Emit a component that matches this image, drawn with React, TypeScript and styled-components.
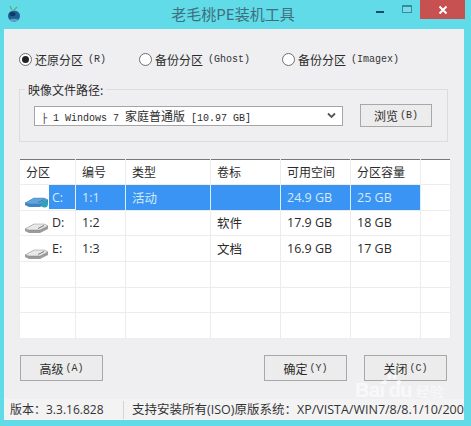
import React from "react";
import styled, { createGlobalStyle } from "styled-components";

const CJK = `"Noto Sans CJK SC", sans-serif`;
const UI = `"Open Sans", "Noto Sans CJK SC", sans-serif`;
const MONO = `"Liberation Mono", "Noto Sans CJK SC", monospace`;

const Global = createGlobalStyle`
  html, body { margin: 0; padding: 0; background: #62dbe9; }
  * { box-sizing: border-box; }
`;

const Win = styled.div`
  position: relative;
  width: 471px;
  height: 426px;
  background: #62dbe9;
  display: flex;
  flex-direction: column;
  overflow: hidden;
  font-family: ${CJK};
  color: #222;
`;
const TitleBar = styled.div`
  height: 29px;
  flex: none;
  display: grid;
  grid-template-columns: 1fr auto 1fr;
  padding-right: 6px;
`;
const TitleIcon = styled.svg`
  width: 14px;
  height: 18px;
  margin: 5px 0 0 7px;
`;
const Title = styled.div`
  font-size: 15px;
  line-height: 28px;
  color: #3d6f7c;
  padding-left: 1px;
`;
const Controls = styled.div`
  display: flex;
  justify-content: flex-end;
  align-items: flex-start;
`;
const MinBtn = styled.div`
  width: 8px;
  height: 2px;
  margin: 11px 18px 0 0;
  background: #124a6a;
`;
const MaxBtn = styled.div`
  width: 10px;
  height: 8px;
  margin: 5px 8px 0 0;
  border: 1px solid #2f8ea6;
  border-top-width: 2px;
  background: #7fd9e4;
`;
const CloseBtn = styled.div`
  width: 45px;
  height: 19px;
  background: #c75050;
  color: #fff;
  display: flex;
  align-items: center;
  justify-content: center;
`;
const Client = styled.div`
  flex: 1;
  margin: 0 7px 6px 4px;
  background: #efeff1;
  display: flex;
  flex-direction: column;
  padding-top: 22px;
  min-height: 0;
`;
const RadioRow = styled.div`
  display: flex;
  height: 16px;
  padding-left: 15px;
  align-items: center;
`;
const RadioItem = styled.div<{ $w: number }>`
  width: ${(p) => p.$w}px;
  display: flex;
  align-items: center;
  gap: 3px;
  font-size: 12px;
  color: #2b2b2b;
`;
const RadioCircle = styled.span<{ $on?: boolean }>`
  width: 13px;
  height: 13px;
  border-radius: 50%;
  border: 1px solid #6e6e6e;
  background: #fff;
  display: flex;
  align-items: center;
  justify-content: center;
  flex: none;
  &::after {
    content: "";
    width: 7px;
    height: 7px;
    border-radius: 50%;
    background: ${(p) => (p.$on ? "#222" : "transparent")};
  }
`;
const Latin = styled.span`
  font-family: ${MONO};
  font-size: 10px;
  margin-left: 2px;
  color: #333;
`;
const Group = styled.fieldset`
  margin: 14px 16px 0 15px;
  padding: 0 0 0 14px;
  height: 61px;
  border: 1px solid #dcdcde;
  display: flex;
  align-items: flex-start;
  min-width: 0;
`;
const Legend = styled.legend`
  margin-left: -9px;
  padding: 0 3px;
  font-size: 12px;
  line-height: 17px;
  color: #2b2b2b;
`;
const GroupRow = styled.div`
  display: flex;
  align-items: center;
  gap: 17px;
  height: 23px;
  margin-top: 6px;
`;
const Combo = styled.div`
  width: 309px;
  height: 20px;
  background: #fff;
  border: 1px solid #a5a5a5;
  display: flex;
  align-items: center;
  justify-content: space-between;
  padding: 0 6px;
  font-family: ${MONO};
  font-size: 10px;
  white-space: pre;
  color: #2b2b2b;
`;
const ComboCjk = styled.span`
  font-family: ${CJK};
  font-size: 12px;
`;
const Btn = styled.div<{ $w: number; $h: number }>`
  width: ${(p) => p.$w}px;
  height: ${(p) => p.$h}px;
  flex: none;
  border: 1px solid #a8a8a8;
  background: #ececec;
  display: flex;
  align-items: center;
  justify-content: center;
  font-size: 12px;
  color: #2b2b2b;
`;
const Table = styled.table`
  margin: 17px 0 0 15px;
  width: 431px;
  height: 180px;
  flex: none;
  background: #fff;
  border-collapse: collapse;
  table-layout: fixed;
  border: 1px solid #777;
  border-right-color: #999;
  font-family: ${UI};
  font-size: 12.5px;
  color: #2b2b2b;
`;
const Th = styled.th`
  height: 25px;
  padding: 0 0 0 6px;
  font-weight: 400;
  text-align: left;
  border: 1px solid #ededed;
  border-top: 0;
  font-size: 12px;
`;
const Td = styled.td<{ $sel?: boolean }>`
  height: 25px;
  padding: 0 0 0 6px;
  border: 1px solid #ececec;
  background: ${(p) => (p.$sel ? "#3a94f3" : "transparent")};
  color: ${(p) => (p.$sel ? "#d4eafc" : "#2b2b2b")};
  border-left-color: ${(p) => (p.$sel ? "#d6f1fb" : "#ececec")};
  border-right-color: ${(p) => (p.$sel ? "#d6f1fb" : "#ececec")};
`;
const DriveCell = styled.td`
  height: 25px;
  padding: 0;
  border: 1px solid #ececec;
`;
const DriveWrap = styled.div`
  display: flex;
  height: 24px;
  align-items: stretch;
`;
const DriveIcon = styled.svg`
  width: 24px;
  height: 14px;
  margin: 9px 0 0 5px;
  flex: none;
`;
const DriveLabel = styled.span<{ $sel?: boolean }>`
  flex: 1;
  padding-left: 3px;
  display: flex;
  align-items: center;
  background: ${(p) => (p.$sel ? "#3a94f3" : "transparent")};
  color: ${(p) => (p.$sel ? "#d4eafc" : "#2b2b2b")};
`;
const Buttons = styled.div`
  display: flex;
  padding: 16px 17px 0 16px;
`;
const Spacer = styled.div`
  flex: 1;
`;
const ButtonGap = styled.div`
  width: 17px;
`;
const Status = styled.div`
  margin-top: auto;
  height: 21px;
  display: flex;
  align-items: center;
  font-family: ${UI};
  font-size: 12px;
  color: #333;
  white-space: nowrap;
  overflow: hidden;
  background: #f3f3f4;
`;
const Version = styled.div`
  width: 120px;
  flex: none;
  padding-left: 6px;
  border-right: 1px solid #d4d4d4;
  height: 18px;
  line-height: 18px;
`;
const StatusText = styled.div`
  padding-left: 8px;
  font-size: 12.5px;
  line-height: 18px;
`;
const Watermark = styled.div`
  position: absolute;
  left: 355px;
  top: 379px;
  display: flex;
  align-items: center;
  gap: 4px;
  font-family: "Liberation Sans", sans-serif;
  font-weight: 700;
  font-size: 20px;
  color: rgba(255, 255, 255, 0.6);
  pointer-events: none;
`;
const WmWord = styled.span`
  letter-spacing: -0.5px;
`;
const Paw = styled.svg`
  position: absolute;
  left: 27px;
  top: -6px;
`;
const WmCjk = styled.span`
  font-family: ${CJK};
  font-size: 14px;
  font-weight: 400;
`;

const Drive = ({ blue }: { blue?: boolean }) => {
  const top = blue ? "#5da5dc" : "#e8e8e8";
  const side = blue ? "#3f86c2" : "#9c9c9c";
  const line = blue ? "#3a7cb3" : "#777";
  return (
    <DriveIcon viewBox="0 0 24 14">
      <path d="M0 9 L9 4 H19 L23 6 V9 L15 13 H4 L0 11 Z" fill={side} />
      <path d="M0 9 L9 4 H19 L23 6 L15 10 H4 Z" fill={top} stroke={line} strokeWidth=".4" />
      <path d="M13 8.5 L19 5.5" stroke={line} strokeWidth="1" />
      {blue && <circle cx="19.5" cy="10" r="3.5" fill="#2fa3b5" />}
    </DriveIcon>
  );
};

const columns = [56, 50, 85, 70, 70, 70, 30];
const Col = styled.col<{ $w: number }>`
  width: ${(p) => p.$w}px;
`;

const rows = [
  { d: "C:", n: "1:1", t: "活动", v: "", f: "24.9 GB", c: "25 GB", sel: true },
  { d: "D:", n: "1:2", t: "", v: "软件", f: "17.9 GB", c: "18 GB" },
  { d: "E:", n: "1:3", t: "", v: "文档", f: "16.9 GB", c: "17 GB" },
  { d: "", n: "", t: "", v: "", f: "", c: "" },
  { d: "", n: "", t: "", v: "", f: "", c: "" },
  { d: "", n: "", t: "", v: "", f: "", c: "" },
];

export default function App() {
  return (
    <Win>
      <Global />
      <TitleBar>
        <TitleIcon viewBox="0 0 14 18">
          <path d="M5 5 L3 1 M7 5 L10 2" stroke="#5fae7a" strokeWidth="1.4" fill="none" />
          <ellipse cx="7" cy="11" rx="6" ry="5.5" fill="#1f5f96" />
          <ellipse cx="5.5" cy="9" rx="3" ry="2" fill="#0f3a68" />
          <ellipse cx="7" cy="15" rx="4" ry="1.3" fill="#5f9fc4" />
        </TitleIcon>
        <Title>老毛桃PE装机工具</Title>
        <Controls>
          <MinBtn />
          <MaxBtn />
          <CloseBtn>
            <svg width="10" height="10" viewBox="0 0 10 10">
              <path d="M1.5 1.5 L8.5 8.5 M8.5 1.5 L1.5 8.5" stroke="#fff" strokeWidth="2" />
            </svg>
          </CloseBtn>
        </Controls>
      </TitleBar>
      <Client>
        <RadioRow>
          <RadioItem $w={120}>
            <RadioCircle $on />还原分区<Latin>(R)</Latin>
          </RadioItem>
          <RadioItem $w={143}>
            <RadioCircle />备份分区<Latin>(Ghost)</Latin>
          </RadioItem>
          <RadioItem $w={150}>
            <RadioCircle />备份分区<Latin>(Imagex)</Latin>
          </RadioItem>
        </RadioRow>
        <Group>
          <Legend>映像文件路径:</Legend>
          <GroupRow>
            <Combo>
              <span>
                ├ 1 Windows 7 <ComboCjk>家庭普通版</ComboCjk> [10.97 GB]
              </span>
              <svg width="9" height="7" viewBox="0 0 9 7">
                <path d="M1 1.5 L4.5 5 L8 1.5" stroke="#555" strokeWidth="1.8" fill="none" />
              </svg>
            </Combo>
            <Btn $w={72} $h={23}>
              浏览<Latin>(B)</Latin>
            </Btn>
          </GroupRow>
        </Group>
        <Table>
          <colgroup>
            {columns.map((w, i) => (
              <Col key={i} $w={w} />
            ))}
          </colgroup>
          <thead>
            <tr>
              <Th>分区</Th>
              <Th>编号</Th>
              <Th>类型</Th>
              <Th>卷标</Th>
              <Th>可用空间</Th>
              <Th>分区容量</Th>
              <Th />
            </tr>
          </thead>
          <tbody>
            {rows.map((r, i) => (
              <tr key={i}>
                <DriveCell>
                  {r.d && (
                    <DriveWrap>
                      <Drive blue={r.sel} />
                      <DriveLabel $sel={r.sel}>{r.d}</DriveLabel>
                    </DriveWrap>
                  )}
                </DriveCell>
                <Td $sel={r.sel}>{r.n}</Td>
                <Td $sel={r.sel}>{r.t}</Td>
                <Td $sel={r.sel}>{r.v}</Td>
                <Td $sel={r.sel}>{r.f}</Td>
                <Td $sel={r.sel}>{r.c}</Td>
                <Td />
              </tr>
            ))}
          </tbody>
        </Table>
        <Buttons>
          <Btn $w={83} $h={26}>
            高级<Latin>(A)</Latin>
          </Btn>
          <Spacer />
          <Btn $w={83} $h={26}>
            确定<Latin>(Y)</Latin>
          </Btn>
          <ButtonGap />
          <Btn $w={83} $h={26}>
            关闭<Latin>(C)</Latin>
          </Btn>
        </Buttons>
        <Status>
          <Version>版本：3.3.16.828</Version>
          <StatusText>支持安装所有(ISO)原版系统：XP/VISTA/WIN7/8/8.1/10/200</StatusText>
        </Status>
      </Client>
      <Watermark>
        <Paw width="20" height="14" viewBox="0 0 20 14" fill="rgba(255,255,255,0.6)">
          <ellipse cx="3" cy="9" rx="2" ry="2.6" />
          <ellipse cx="7.5" cy="4" rx="2" ry="2.8" />
          <ellipse cx="12.5" cy="4" rx="2" ry="2.8" />
          <ellipse cx="17" cy="9" rx="2" ry="2.6" />
        </Paw>
        <WmWord>Bai</WmWord>
        <WmWord>du</WmWord>
        <WmCjk>经验</WmCjk>
      </Watermark>
    </Win>
  );
}
